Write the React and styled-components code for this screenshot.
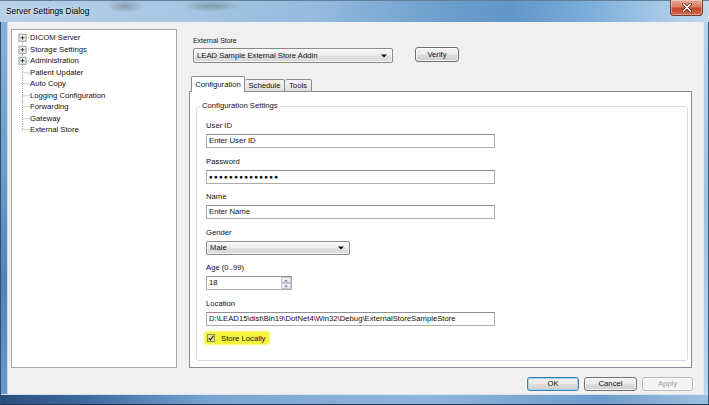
import React from 'react';
import styled, { createGlobalStyle } from 'styled-components';

const Global = createGlobalStyle`
  html, body { margin: 0; padding: 0; background: #fff; }
  body { font-family: "Liberation Sans", Arial, sans-serif; }
  * { box-sizing: border-box; }
`;

const Window = styled.div`
  width: 709px;
  height: 405px;
  display: flex;
  flex-direction: column;
  overflow: hidden;
  font-size: 7.7px;
  color: #111;
  background: #6f9dc9;
`;

const TitleBar = styled.div`
  height: 22px;
  flex: none;
  display: flex;
  align-items: flex-start;
  border-top: 1px solid #5f7f9c;
  background:
    radial-gradient(ellipse 18px 7px at 125px 5px, rgba(80,70,60,0.35), rgba(80,70,60,0) 100%),
    radial-gradient(ellipse 30px 6px at 212px 5px, rgba(60,90,50,0.35), rgba(60,90,50,0) 100%),
    linear-gradient(90deg, #b7d0e8 0%, #a6c6e3 25%, #94bade 45%, #6e9fcd 62%, #6196c9 72%, #7fb0dc 84%, #a9cbe7 94%, #c3d9ec 100%);
`;

const TitleText = styled.div`
  padding: 5px 0 0 6px;
  font-size: 8.4px;
  line-height: 11px;
  color: #000;
  text-shadow: 0 0 4px rgba(255,255,255,0.9);
`;

const CloseButton = styled.div`
  margin: -1px 6px 0 auto;
  width: 33px;
  height: 16px;
  border: 1px solid #7a3a2c;
  border-top: none;
  border-radius: 0 0 4px 4px;
  background: linear-gradient(180deg, #e8a999 0%, #d97c64 45%, #c4472f 55%, #d06a4e 100%);
  display: flex;
  align-items: center;
  justify-content: center;
  box-shadow: inset 0 0 0 1px rgba(255,255,255,0.35);
`;

const Middle = styled.div`
  flex: none;
  height: 372px;
  display: flex;
`;

const LeftFrame = styled.div`
  width: 8px;
  flex: none;
  border-left: 1px solid #2f4f70;
  background: linear-gradient(180deg, #86b0d8 0%, #6d9ccb 40%, #4f82b8 70%, #6a9acb 100%);
  box-shadow: inset -1px 0 0 #c8dcee;
`;

const RightFrame = styled.div`
  width: 6px;
  flex: none;
  border-right: 1px solid #3a5a7a;
  background: linear-gradient(180deg, #b9d3ea 0%, #9fc2e2 50%, #bcd6ec 100%);
  box-shadow: inset 1px 0 0 #dce9f4;
`;

const BottomFrame = styled.div`
  flex: 1;
  border-bottom: 1px solid #1f3552;
  border-left: 1px solid #2f4f70;
  border-right: 1px solid #3a5a7a;
  background: linear-gradient(90deg, #2a4f7c 0%, #3d6a9c 12%, #7aa6d1 30%, #8cb5dc 60%, #6f9dca 85%, #9fc1e0 100%);
  box-shadow: inset 0 1px 0 #d6e4f0;
`;

const Body = styled.div`
  flex: 1;
  display: flex;
  flex-direction: column;
  background: #f0f0f0;
`;

const MainRow = styled.div`
  display: flex;
  padding: 7px 11px 0 3px;
`;

const Tree = styled.div`
  width: 166px;
  height: 339px;
  flex: none;
  background: #fff;
  border: 1px solid #a0a4ab;
  padding-top: 2px;
`;

const TreeRow = styled.div`
  height: 11.54px;
  display: flex;
  align-items: center;
  line-height: 11.54px;
  white-space: nowrap;
`;

const RightCol = styled.div`
  flex: 1;
  margin-left: 12px;
  display: flex;
  flex-direction: column;
`;

const TopSection = styled.div`
  padding: 7px 0 0 4px;
  display: flex;
  flex-direction: column;
  gap: 2px;
`;

const SmallLabel = styled.div`
  font-size: 6.9px;
  line-height: 10px;
`;

const ComboRow = styled.div`
  display: flex;
  align-items: flex-start;
`;

const Combo = styled.div`
  width: ${p => p.$w}px;
  height: 15px;
  border: 1px solid #8a8a8a;
  border-radius: 2px;
  background: linear-gradient(180deg, #f7f7f7 0%, #ededed 48%, #e0e0e0 52%, #d9d9d9 100%);
  display: flex;
  align-items: center;
  padding: 0 5px 0 3px;
  box-shadow: inset 0 0 0 1px rgba(255,255,255,0.7);
`;

const ComboText = styled.span`
  flex: 1;
  line-height: 13px;
`;

const Button = styled.div`
  width: ${p => p.$w}px;
  height: ${p => p.$h || 14}px;
  margin-top: ${p => p.$mt || 0}px;
  margin-left: ${p => p.$ml || 0}px;
  border: 1px solid ${p => (p.$default ? '#3c7fb1' : p.$disabled ? '#b7babd' : '#707070')};
  border-radius: 3px;
  background: ${p => p.$disabled
    ? '#f4f4f4'
    : 'linear-gradient(180deg, #f2f2f2 0%, #ebebeb 48%, #dddddd 52%, #cfcfcf 100%)'};
  box-shadow: ${p => (p.$default ? 'inset 0 0 0 1px #a3d3f0' : 'inset 0 0 0 1px rgba(255,255,255,0.75)')};
  color: ${p => (p.$disabled ? '#9c9c9c' : '#111')};
  display: flex;
  align-items: center;
  justify-content: center;
  line-height: 12px;
`;

const TabStrip = styled.div`
  margin-top: 13px;
  height: 16px;
  display: flex;
  align-items: flex-end;
  padding-left: 2px;
  margin-bottom: -1px;
  position: relative;
  z-index: 1;
`;

const Tab = styled.div`
  width: ${p => p.$w}px;
  height: ${p => (p.$active ? 16 : 13)}px;
  border: 1px solid #898c95;
  border-bottom: ${p => (p.$active ? 'none' : '1px solid #898c95')};
  border-left: ${p => (p.$first || p.$active ? '1px solid #898c95' : 'none')};
  border-radius: 2px 2px 0 0;
  background: ${p => (p.$active ? '#fff' : 'linear-gradient(180deg, #f3f3f3 0%, #ebebeb 50%, #dedede 100%)')};
  display: flex;
  align-items: ${p => (p.$active ? 'flex-start' : 'center')};
  justify-content: center;
  padding-top: ${p => (p.$active ? 3 : 0)}px;
  line-height: 10px;
`;

const Panel = styled.div`
  height: 277px;
  border: 1px solid #898c95;
  background: #fff;
  display: flex;
  flex-direction: column;
`;

const Group = styled.fieldset`
  flex: 1;
  margin: 9px 3px 6px 6px;
  padding: 10px 0 0 9px;
  border: 1px solid #d5dfe5;
  border-radius: 3px;
  min-width: 0;
  display: flex;
  flex-direction: column;
  gap: 8.5px;
`;

const Legend = styled.legend`
  padding: 0 2px;
  margin-left: -6px;
  line-height: 10px;
  font-size: 7.7px;
`;

const Field = styled.div`
  display: flex;
  flex-direction: column;
  gap: 3px;
`;

const FieldLabel = styled.div`
  line-height: 10px;
`;

const TextBox = styled.div`
  width: ${p => p.$w}px;
  height: 14px;
  border: 1px solid #abadb3;
  border-top-color: #8e9097;
  background: #fff;
  display: flex;
  align-items: center;
  padding-left: 2px;
  line-height: 12px;
  white-space: nowrap;
  overflow: hidden;
`;

const Dots = styled.span`
  font-size: 6.5px;
  letter-spacing: 1.1px;
  color: #111;
`;

const Spinner = styled.div`
  margin-left: auto;
  width: 10px;
  height: 12px;
  display: flex;
  flex-direction: column;
`;

const SpinButton = styled.div`
  flex: 1;
  border: 1px solid #c5cad0;
  background: linear-gradient(180deg, #f4f6f8, #e2e6ea);
  display: flex;
  align-items: center;
  justify-content: center;
`;

const CheckRow = styled.div`
  margin-top: -2px;
  display: flex;
`;

const Highlight = styled.div`
  margin-left: -1px;
  height: 12px;
  padding: 0 4px 0 2px;
  display: flex;
  align-items: center;
  gap: 6px;
  background: #f4f43c;
  border-radius: 3px;
  box-shadow: 0 0 2px 1px rgba(244,244,60,0.8);
`;

const CheckBox = styled.div`
  width: 8px;
  height: 8px;
  border: 1px solid #8c8c5a;
  background: linear-gradient(135deg, #e4e49c, #f2f28a);
  display: flex;
  align-items: center;
  justify-content: center;
`;

const ButtonRow = styled.div`
  display: flex;
  justify-content: flex-end;
  gap: 5px;
  padding: 9px 10px 0 0;
`;

function Connector({ first, last, expandable }) {
  const h = 11.54;
  const cy = h / 2;
  return (
    <svg width="18" height={h} viewBox={`0 0 18 ${h}`} style={{ flex: 'none' }}>
      <line x1="10.5" y1={first ? cy : 0} x2="10.5" y2={last ? cy : h} stroke="#a0a0a0" strokeWidth="1" strokeDasharray="1 1" />
      <line x1={expandable ? 14 : 10.5} y1={cy} x2="17.5" y2={cy} stroke="#a0a0a0" strokeWidth="1" strokeDasharray="1 1" />
      {expandable && (
        <g>
          <rect x="7" y={cy - 3.5} width="7" height="7" fill="#f4f4f4" stroke="#8f9aa5" strokeWidth="1" />
          <line x1="8.6" y1={cy} x2="12.4" y2={cy} stroke="#333" strokeWidth="1" />
          <line x1="10.5" y1={cy - 1.9} x2="10.5" y2={cy + 1.9} stroke="#333" strokeWidth="1" />
        </g>
      )}
    </svg>
  );
}

const ArrowDown = () => (
  <svg width="6" height="4" viewBox="0 0 6 4"><path d="M0 0.5 L6 0.5 L3 3.5 Z" fill="#111" /></svg>
);

const treeItems = [
  { label: 'DICOM Server', exp: true },
  { label: 'Storage Settings', exp: true },
  { label: 'Administration', exp: true },
  { label: 'Patient Updater' },
  { label: 'Auto Copy' },
  { label: 'Logging Configuration' },
  { label: 'Forwarding' },
  { label: 'Gateway' },
  { label: 'External Store' },
];

export default function App() {
  return (
    <>
      <Global />
      <Window>
        <TitleBar>
          <TitleText>Server Settings Dialog</TitleText>
          <CloseButton>
            <svg width="10" height="9" viewBox="0 0 10 9">
              <path d="M1.5 1 L8.5 8 M8.5 1 L1.5 8" stroke="#5a1a10" strokeWidth="3" strokeLinecap="round" />
              <path d="M1.5 1 L8.5 8 M8.5 1 L1.5 8" stroke="#fff" strokeWidth="1.6" strokeLinecap="round" />
            </svg>
          </CloseButton>
        </TitleBar>
        <Middle>
          <LeftFrame />
          <Body>
            <MainRow>
              <Tree>
                {treeItems.map((it, i) => (
                  <TreeRow key={it.label}>
                    <Connector first={i === 0} last={i === treeItems.length - 1} expandable={it.exp} />
                    {it.label}
                  </TreeRow>
                ))}
              </Tree>
              <RightCol>
                <TopSection>
                  <SmallLabel>External Store</SmallLabel>
                  <ComboRow>
                    <Combo $w={200}>
                      <ComboText>LEAD Sample External Store Addin</ComboText>
                      <ArrowDown />
                    </Combo>
                    <Button $w={44} $h={15} $mt={-1} $ml={22}>Verify</Button>
                  </ComboRow>
                </TopSection>
                <TabStrip>
                  <Tab $w={54} $active $first>Configuration</Tab>
                  <Tab $w={40}>Schedule</Tab>
                  <Tab $w={27}>Tools</Tab>
                </TabStrip>
                <Panel>
                  <Group>
                    <Legend>Configuration Settings</Legend>
                    <Field>
                      <FieldLabel>User ID</FieldLabel>
                      <TextBox $w={289}>Enter User ID</TextBox>
                    </Field>
                    <Field>
                      <FieldLabel>Password</FieldLabel>
                      <TextBox $w={289}><Dots>{'●'.repeat(14)}</Dots></TextBox>
                    </Field>
                    <Field>
                      <FieldLabel>Name</FieldLabel>
                      <TextBox $w={289}>Enter Name</TextBox>
                    </Field>
                    <Field>
                      <FieldLabel>Gender</FieldLabel>
                      <Combo $w={144} style={{ height: 14 }}>
                        <ComboText>Male</ComboText>
                        <ArrowDown />
                      </Combo>
                    </Field>
                    <Field>
                      <FieldLabel>Age (0..99)</FieldLabel>
                      <TextBox $w={86}>
                        18
                        <Spinner>
                          <SpinButton>
                            <svg width="4" height="3" viewBox="0 0 4 3"><path d="M0 2.5 L4 2.5 L2 0.5 Z" fill="#7b8590" /></svg>
                          </SpinButton>
                          <SpinButton>
                            <svg width="4" height="3" viewBox="0 0 4 3"><path d="M0 0.5 L4 0.5 L2 2.5 Z" fill="#7b8590" /></svg>
                          </SpinButton>
                        </Spinner>
                      </TextBox>
                    </Field>
                    <Field>
                      <FieldLabel>Location</FieldLabel>
                      <TextBox $w={289}>D:\LEAD15\dist\Bin19\DotNet4\Win32\Debug\ExternalStoreSampleStore</TextBox>
                    </Field>
                    <CheckRow>
                      <Highlight>
                        <CheckBox>
                          <svg width="6" height="6" viewBox="0 0 6 6"><path d="M0.8 3.2 L2.4 5 L5.3 0.8" stroke="#2a2a10" strokeWidth="1.2" fill="none" /></svg>
                        </CheckBox>
                        Store Locally
                      </Highlight>
                    </CheckRow>
                  </Group>
                </Panel>
              </RightCol>
            </MainRow>
            <ButtonRow>
              <Button $w={52} $default>OK</Button>
              <Button $w={53}>Cancel</Button>
              <Button $w={51} $disabled>Apply</Button>
            </ButtonRow>
          </Body>
          <RightFrame />
        </Middle>
        <BottomFrame />
      </Window>
    </>
  );
}
